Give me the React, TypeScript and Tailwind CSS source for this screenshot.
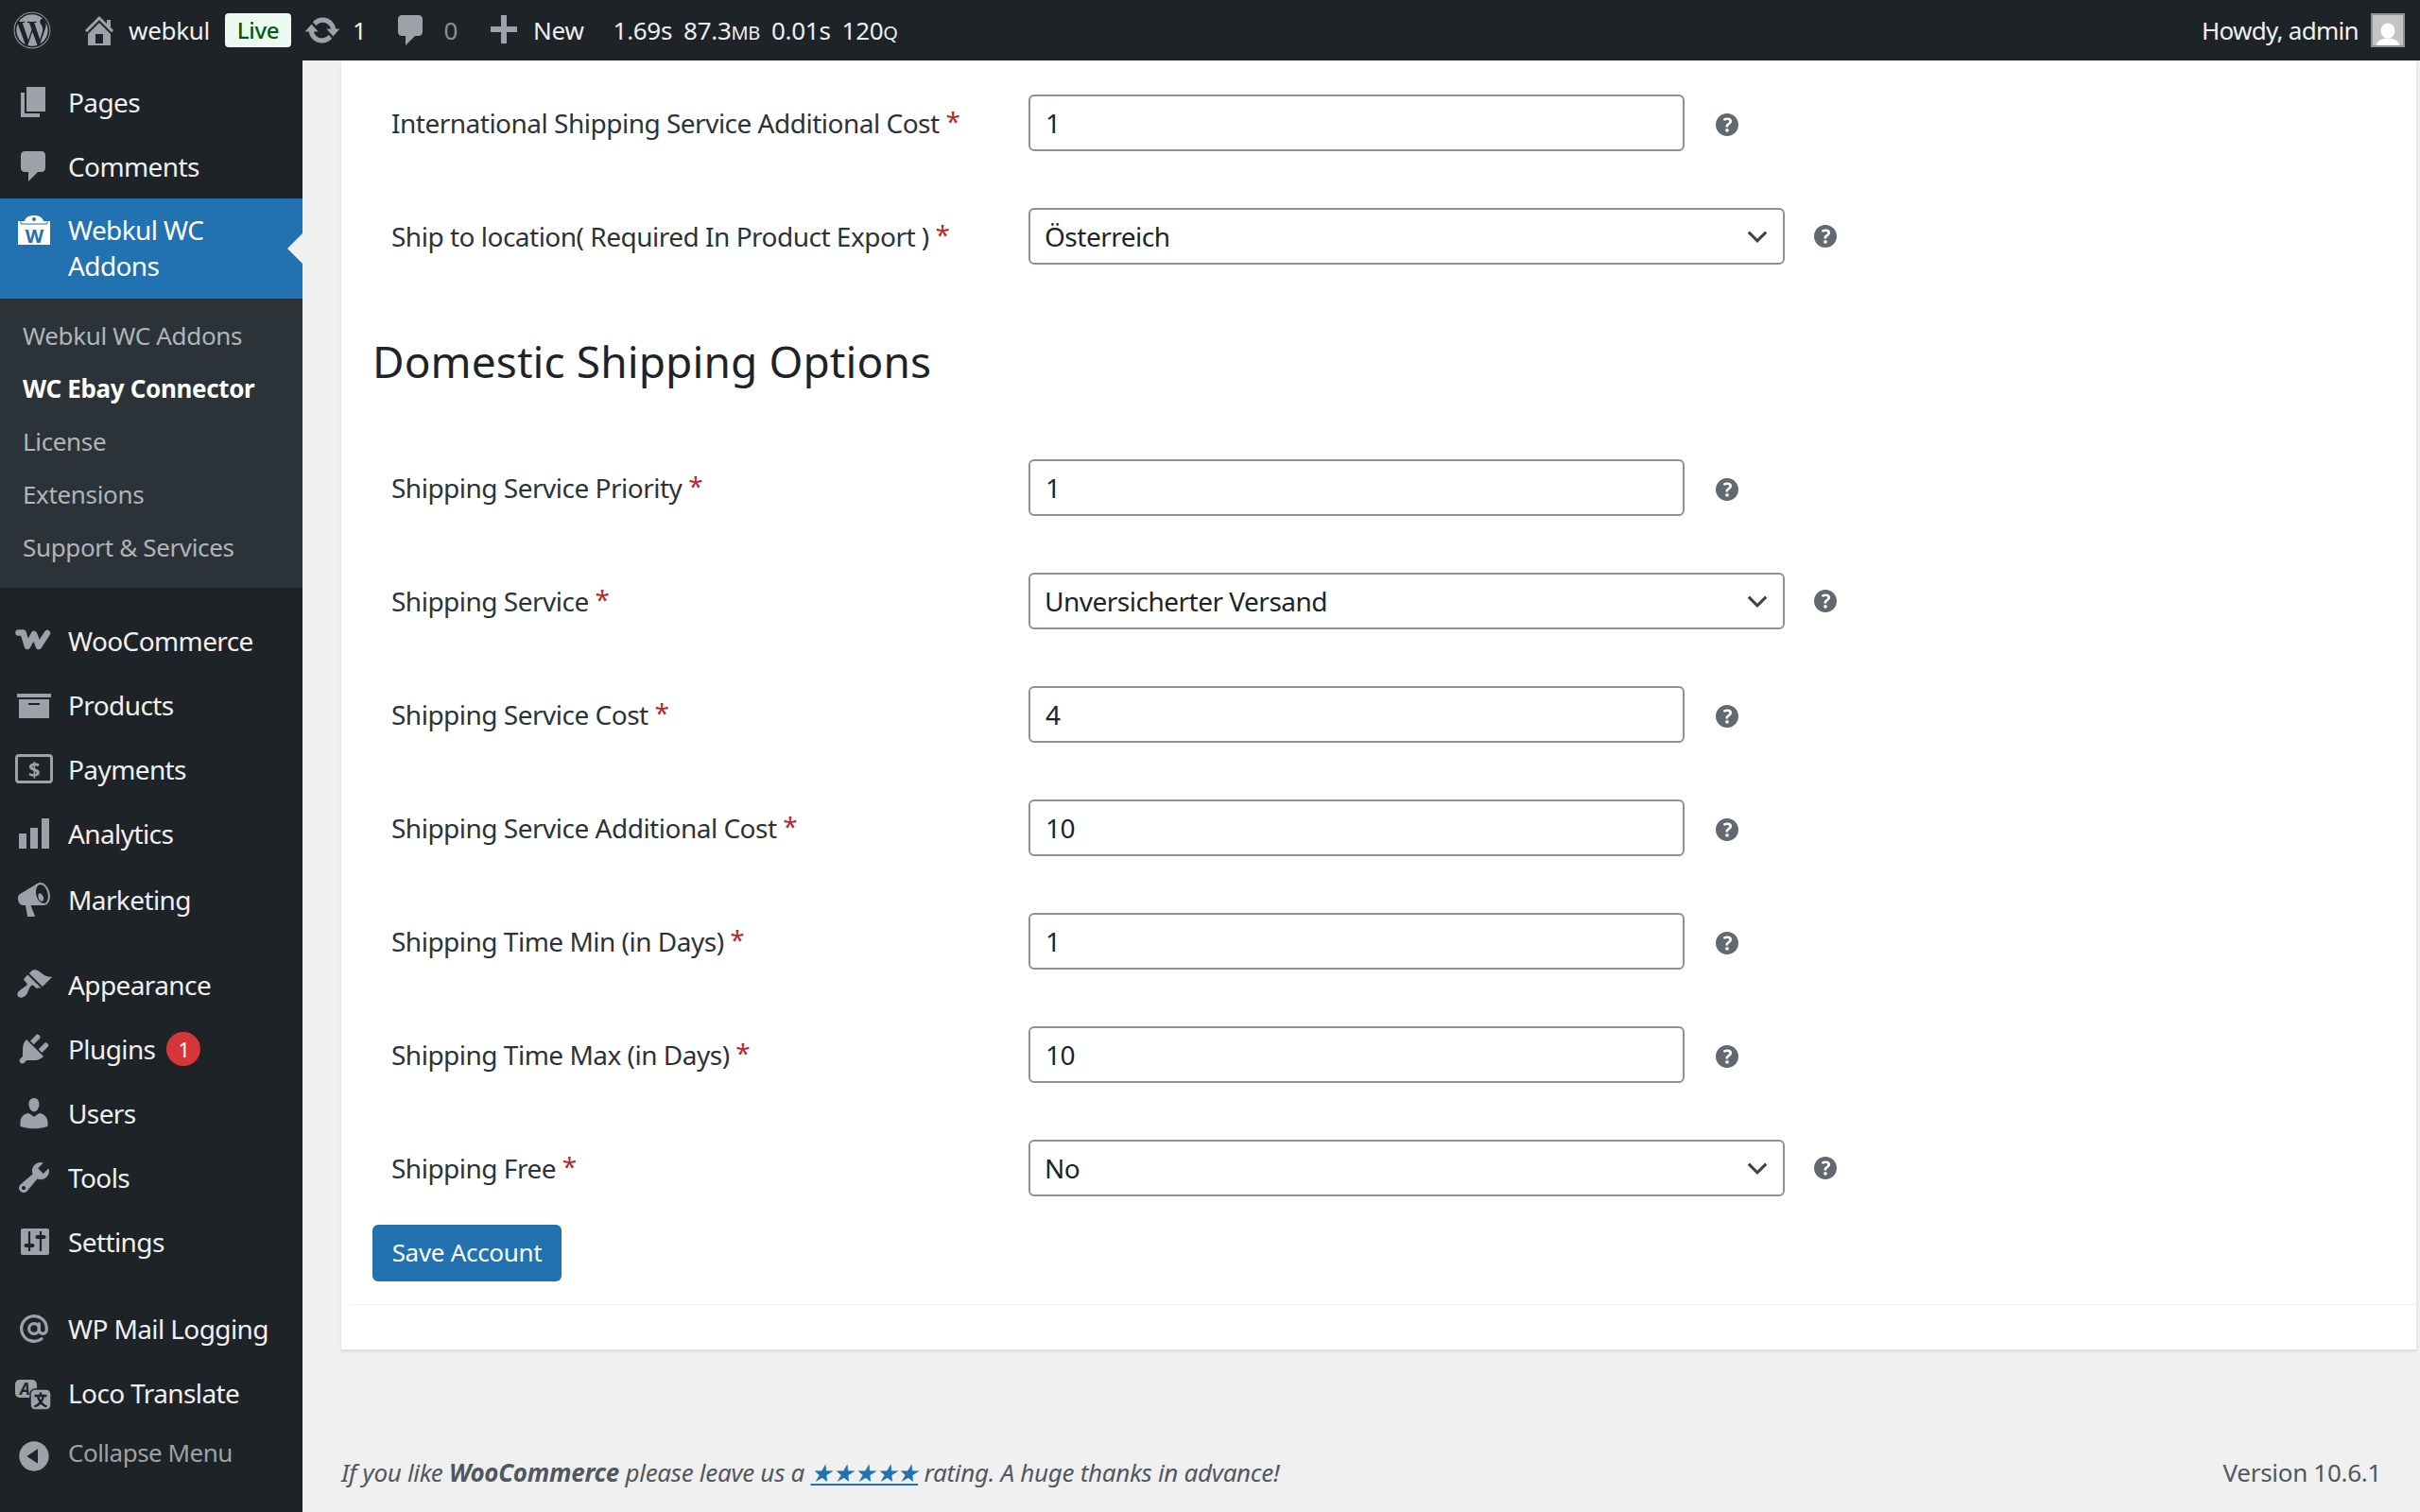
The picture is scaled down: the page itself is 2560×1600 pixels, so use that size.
import { ReactNode } from 'react'
import { AtSign } from 'lucide-react'
import { FaWordpress } from 'react-icons/fa'

const icons: Record<string, string> = {
  home: 'M16 8.5l1.53 1.53-1.06 1.06L10 4.62l-6.47 6.47-1.06-1.06L10 2.5l4 4v-2h2v4zm-6-2.46l6 5.99V18H4v-5.97zM12 17v-5H8v5h4z',
  update: 'M10.2 3.28c3.53 0 6.43 2.61 6.92 6h2.08l-3.5 4-3.5-4h2.32c-.45-1.97-2.21-3.45-4.32-3.45-1.45 0-2.73.71-3.54 1.78L4.95 5.66C6.23 4.2 8.11 3.28 10.2 3.28zm-.4 13.44c-3.52 0-6.43-2.61-6.92-6H.8l3.5-4c1.17 1.33 2.33 2.67 3.5 4H5.48c.45 1.97 2.21 3.45 4.32 3.45 1.45 0 2.73-.71 3.54-1.78l1.71 1.95c-1.28 1.46-3.15 2.38-5.25 2.38z',
  comment: 'M5 2h9c1.1 0 2 .9 2 2v7c0 1.1-.9 2-2 2h-2l-5 5v-5H5c-1.1 0-2-.9-2-2V4c0-1.1.9-2 2-2z',
  plus: 'M17 8v3h-5.5v6h-3v-6H3V8h5.5V2h3v6H17z',
  pages: 'M6 15V2h10v13H6zm-1 1h8v2H3V5h2v11z',
  products: 'M19 4v2H1V4h18zM2 7h16v10H2V7zm11 3V9H7v1h6z',
  analytics: 'M18 18V2h-4v16h4zm-6 0V7H8v11h4zm-6 0v-8H2v8h4z',
  marketing: 'M18.15 5.94c.46 1.62.38 3.22-.02 4.48-.42 1.28-1.26 2.18-2.3 2.48-.16.06-.26.06-.4.06-.06.02-.12.02-.18.02-.06.02-.14.02-.22.02h-6.8l2.22 5.5c.02.14-.06.26-.14.34-.08.1-.24.16-.34.16H6.95c-.1 0-.26-.06-.34-.16-.08-.08-.16-.2-.14-.34l-1-5.5H4.25l-.02-.02c-.5.06-1.08-.18-1.54-.62s-.88-1.08-1.06-1.88c-.24-.8-.2-1.56-.02-2.2.2-.62.58-1.08 1.06-1.3l.02-.02 9-5.4c.1-.06.18-.1.24-.16.06-.04.14-.08.24-.12.16-.08.28-.12.5-.18 1.04-.3 2.24.1 3.22.98s1.84 2.24 2.26 3.86zm-2.58 5.98h-.02c.4-.1.74-.34 1.04-.7.58-.7.86-1.76.86-3.04 0-.64-.1-1.3-.28-1.98-.34-1.36-1.02-2.5-1.78-3.24s-1.68-1.1-2.46-.88c-.82.22-1.4.96-1.7 2-.32 1.04-.34 2.4.02 3.76.38 1.36 1.04 2.48 1.8 3.22.78.74 1.62 1.1 2.52.86zm-2.98-5.2c.24-.1.46-.1.7-.02.76.24 1.44 1.04 1.7 2.06.06.24.1.46.1.68 0 .68-.28 1.2-.76 1.38-.06.02-.12.04-.18.04-.66.16-1.5-.64-1.8-1.78-.3-1.1-.1-2.12.24-2.36z',
  appearance: 'M14.48 11.06L7.41 3.99l1.5-1.5c.5-.56 2.3-.47 3.51.32 1.21.8 1.43 1.28 2.91 2.1 1.18.64 2.45 1.26 4.45.85zm-.71.71L6.7 4.7 4.93 6.47c-.39.39-.39 1.02 0 1.41l1.06 1.06c.39.39.39 1.03 0 1.42-.6.6-1.43 1.11-2.21 1.69-.35.26-.7.53-1.01.84C1.43 13.25.87 15.3 1.4 16s1.6 1.03 2.37.75c1.07-.4 2.02-1.08 2.59-2.15.33-.6.6-1.27.85-1.95.27-.74.59-1.44 1.22-2.06.39-.39 1.02-.39 1.41 0l1.06 1.06c.39.39 1.02.39 1.41 0z',
  plugins: 'M13.11 4.36L9.87 7.6 8 5.73l3.24-3.24c.35-.34 1.05-.2 1.56.32.52.51.66 1.21.31 1.55zm-8 1.77l.91-1.12 9.01 9.01-1.19.84c-.71.71-2.63 1.16-3.82 1.16H6.14L4.9 17.26c-.59.59-1.54.59-2.12 0-.59-.58-.59-1.53 0-2.12l1.24-1.24v-3.88c0-1.13.4-3.19 1.09-3.89zm7.26 3.97l3.24-3.24c.34-.35 1.04-.21 1.55.31.52.51.66 1.21.31 1.55l-3.24 3.25z',
  users: 'M10 9.25c-2.27 0-2.73-3.44-2.73-3.44C7 4.02 7.82 2 9.97 2c2.16 0 2.98 2.02 2.71 3.81 0 0-.41 3.44-2.68 3.44zm0 2.57L12.72 10c2.39 0 4.52 2.33 4.52 4.53v2.49s-3.65 1.13-7.24 1.13c-3.65 0-7.24-1.13-7.24-1.13v-2.49c0-2.25 1.94-4.48 4.47-4.48z',
  tools: 'M16.68 9.77c-1.34 1.34-3.3 1.67-4.95.99l-5.41 6.52c-.99.99-2.59.99-3.58 0s-.99-2.59 0-3.57l6.52-5.42c-.68-1.65-.35-3.61.99-4.95 1.28-1.28 3.12-1.62 4.72-1.06l-2.89 2.89 2.82 2.82 2.86-2.87c.53 1.58.18 3.39-1.08 4.65zM3.81 16.21c.4.39 1.04.39 1.43 0 .4-.4.4-1.04 0-1.43-.39-.4-1.03-.4-1.43 0-.39.39-.39 1.03 0 1.43z',
  collapse: 'M10 2.16c4.33 0 7.84 3.51 7.84 7.84s-3.51 7.84-7.84 7.84S2.16 14.33 2.16 10 5.71 2.16 10 2.16zm2 11.72V6.12L6.18 9.97z',
  help: 'M17 10c0-3.87-3.14-7-7-7-3.87 0-7 3.13-7 7s3.13 7 7 7c3.86 0 7-3.13 7-7zm-6.3 1.48H9.14v-.43c0-.38.08-.7.24-.98s.46-.57.88-.89c.41-.29.68-.53.81-.71.14-.18.2-.39.2-.62 0-.25-.09-.44-.28-.58-.19-.13-.45-.19-.79-.19-.58 0-1.25.19-2 .57l-.64-1.28c.87-.49 1.8-.74 2.77-.74.81 0 1.45.2 1.92.58.48.39.71.91.71 1.55 0 .43-.09.8-.29 1.11-.19.32-.57.67-1.11 1.06-.38.28-.61.49-.71.63-.1.15-.15.34-.15.57v.35zm-1.47 2.74c-.18-.18-.27-.43-.27-.76 0-.33.08-.59.26-.77s.43-.27.77-.27c.32 0 .57.09.75.27s.27.44.27.77c0 .32-.09.57-.27.75s-.43.28-.75.28c-.33 0-.58-.09-.76-.27z',
}

function Dash({ name, className = 'w-10 h-10 fill-[#9ca2a7]' }: { name: string; className?: string }) {
  return (
    <svg viewBox="0 0 20 20" className={className}>
      <path d={icons[name]} />
    </svg>
  )
}

function WooIcon() {
  return (
    <svg viewBox="0 0 40 40" className="w-10 h-10">
      <path
        d="M3.500 11.500h5L13 26l7-13 5 13 9-14"
        className="fill-none stroke-[#9ca2a7]"
        strokeWidth="6.500"
        strokeLinecap="round"
        strokeLinejoin="round"
      />
    </svg>
  )
}

function PaymentsIcon() {
  return (
    <svg viewBox="0 0 40 40" className="w-10 h-10">
      <rect x="1.500" y="5.500" width="37" height="28" rx="2.500" className="fill-none stroke-[#9ca2a7]" strokeWidth="3" />
      <text x="20" y="28" textAnchor="middle" className="fill-[#9ca2a7] font-bold text-[22px]">$</text>
    </svg>
  )
}

function SettingsIcon() {
  return (
    <svg viewBox="0 0 40 40" className="w-10 h-10">
      <rect x="6" y="6" width="30" height="28" rx="2" className="fill-[#9ca2a7]" />
      <path d="M15 9v21M27 9v21" className="stroke-[#1d2327]" strokeWidth="2.200" />
      <path d="M11.500 24h7M23.500 15h7" className="stroke-[#1d2327]" strokeWidth="4" strokeLinecap="round" />
    </svg>
  )
}

function LocoIcon() {
  return (
    <svg viewBox="0 0 40 40" className="w-10 h-10">
      <rect x="0" y="6" width="23" height="19" rx="5" className="fill-[#9ca2a7]" />
      <text x="10" y="22" textAnchor="middle" className="fill-[#1d2327] font-bold italic text-[17px]">A</text>
      <rect x="16" y="16" width="22" height="22" rx="5" className="fill-[#9ca2a7] stroke-[#1d2327]" strokeWidth="1.500" />
      <path d="M27 19.500v3.500M20.500 23h13M24 23c.8 5 4.500 9.500 9.500 11.500M30 23c-.8 5-4.500 9.500-9.500 11.500" className="fill-none stroke-[#1d2327]" strokeWidth="2.400" />
    </svg>
  )
}

function BagIcon() {
  return (
    <svg viewBox="0 0 40 40" className="w-10 h-10">
      <path d="M3 7h7c1-4 4.500-6 10-6s9 2 10 6h7v25H3z" className="fill-white" />
      <path d="M6 7.500v2.500h28V7.500" className="fill-none stroke-[#2271b1]" strokeWidth="1" />
      <circle cx="20" cy="5" r="2" className="fill-[#2271b1]" />
      <text x="20" y="29.500" textAnchor="middle" className="fill-[#2271b1] font-bold text-[20px]">W</text>
    </svg>
  )
}

function MenuItem({ icon, label, children }: { icon: ReactNode; label: string; children?: ReactNode }) {
  return (
    <div className="h-[68px] flex items-center pl-4 text-[#f0f0f1]">
      <span className="w-10 h-10 flex items-center justify-center shrink-0">{icon}</span>
      <span className="ml-4">{label}</span>
      {children}
    </div>
  )
}

function SubItem({ label, current }: { label: string; current?: boolean }) {
  return (
    <div className={current ? 'h-14 flex items-center pl-6 font-bold text-white' : 'h-14 flex items-center pl-6 text-[#b0b5b9]'}>
      {label}
    </div>
  )
}

function Sidebar() {
  return (
    <aside className="w-80 shrink-0 bg-[#1d2327] pt-[10px] text-[28px] tracking-[-0.6px] relative">
      <MenuItem icon={<Dash name="pages" />} label="Pages" />
      <MenuItem icon={<Dash name="comment" />} label="Comments" />
      <div className="h-[106px] bg-[#2271b1] flex items-start pl-4 pt-[14px] text-white relative">
        <span className="w-10 h-10 mt-[3px] shrink-0 flex items-center justify-center"><BagIcon /></span>
        <span className="ml-4 leading-[38px] w-[200px]">Webkul WC Addons</span>
        <span className="absolute right-0 top-[37px] border-y-[16px] border-r-[16px] border-y-transparent border-r-[#f0f0f1]" />
      </div>
      <div className="h-[306px] bg-[#2c3338] pt-[11px] text-[26px] tracking-[-0.35px]">
        <SubItem label="Webkul WC Addons" />
        <SubItem label="WC Ebay Connector" current />
        <SubItem label="License" />
        <SubItem label="Extensions" />
        <SubItem label="Support & Services" />
      </div>
      <div className="mt-[22px]">
        <MenuItem icon={<WooIcon />} label="WooCommerce" />
        <MenuItem icon={<Dash name="products" />} label="Products" />
        <MenuItem icon={<PaymentsIcon />} label="Payments" />
        <MenuItem icon={<Dash name="analytics" />} label="Analytics" />
      </div>
      <div className="mt-[2px]">
        <MenuItem icon={<Dash name="marketing" />} label="Marketing" />
      </div>
      <div className="mt-[22px]">
        <MenuItem icon={<Dash name="appearance" />} label="Appearance" />
        <MenuItem icon={<Dash name="plugins" />} label="Plugins">
          <span className="ml-3 w-9 h-9 rounded-full bg-[#d63638] text-white text-[22px] flex items-center justify-center">1</span>
        </MenuItem>
        <MenuItem icon={<Dash name="users" />} label="Users" />
        <MenuItem icon={<Dash name="tools" />} label="Tools" />
        <MenuItem icon={<SettingsIcon />} label="Settings" />
      </div>
      <div className="mt-6">
        <MenuItem icon={<AtSign className="w-8 h-8 text-[#9ca2a7]" strokeWidth={2.4} />} label="WP Mail Logging" />
        <MenuItem icon={<LocoIcon />} label="Loco Translate" />
      </div>
      <div className="flex items-center pl-4 h-[58px] text-[26px] tracking-[-0.5px] text-[#9ca2a7]">
        <span className="w-10 h-10 mt-2 shrink-0"><Dash name="collapse" /></span>
        <span className="ml-4">Collapse Menu</span>
      </div>
    </aside>
  )
}

function TopBar() {
  return (
    <header className="h-16 bg-[#1d2327] flex items-center text-[26px] tracking-[-0.3px] text-[#f0f0f1] whitespace-nowrap">
      <FaWordpress className="ml-[14px] w-10 h-10 text-[#9ca2a7]" />
      <Dash name="home" className="ml-[31px] w-10 h-10 fill-[#9ca2a7]" />
      <span className="ml-[11px]">webkul</span>
      <span className="ml-4 h-9 w-[70px] rounded bg-[#edfaef] text-[#005c12] text-[24px] font-medium flex items-center justify-center">Live</span>
      <Dash name="update" className="ml-[13px] w-10 h-10 fill-[#9ca2a7]" />
      <span className="ml-[12px]">1</span>
      <Dash name="comment" className="ml-[27px] w-10 h-10 fill-[#9ca2a7]" />
      <span className="ml-[15px] text-[#8c8f94]">0</span>
      <Dash name="plus" className="ml-[29px] w-10 h-10 fill-[#9ca2a7]" />
      <span className="ml-[11px]">New</span>
      <span className="ml-[31px]">1.69s</span>
      <span className="ml-[12px]">87.3<span className="text-[20px]">MB</span></span>
      <span className="ml-[12px]">0.01s</span>
      <span className="ml-[12px]">120<span className="text-[20px]">Q</span></span>
      <span className="ml-auto tracking-[-0.7px]">Howdy, admin</span>
      <span className="ml-[13px] mr-4 w-9 h-9 border-2 border-[#8f9194] bg-[#c4c4c4] flex items-end justify-center overflow-hidden">
        <svg viewBox="2 2 32 32" className="w-8 h-8 fill-white shrink-0">
          <ellipse cx="18" cy="18.500" rx="7.500" ry="8" />
          <path d="M6 34c0-5 6-7.500 12-7.500s12 2.500 12 7.500z" />
        </svg>
      </span>
    </header>
  )
}

function Help({ select }: { select?: boolean }) {
  return (
    <svg viewBox="3 3 14 14" className={select ? 'ml-[31px] w-6 h-6 fill-[#646970]' : 'ml-[33px] mt-[3px] w-6 h-6 fill-[#646970]'}>
      <path d={icons.help} />
    </svg>
  )
}

function Row({ label, value, select }: { label: string; value: string; select?: boolean }) {
  return (
    <div className="h-[60px] flex items-center">
      <label className="w-[694px] shrink-0 pl-5 text-[#2c3338]">
        {label} <span className="text-[#b32d2e] relative -top-0.5">*</span>
      </label>
      {select ? (
        <div className="relative w-[800px]">
          <select
            defaultValue={value}
            className="w-full h-[60px] appearance-none bg-white border-2 border-[#8c8f94] rounded-md pl-[15px] text-[28px] text-[#1d2327]"
          >
            <option>{value}</option>
          </select>
          <svg viewBox="0 0 20 12" className="absolute right-[18px] top-[24px] w-[22px] h-[13px] fill-none stroke-[#3c434a] pointer-events-none" strokeWidth="2.800">
            <path d="M1.500 1.500L10 10l8.500-8.500" />
          </svg>
        </div>
      ) : (
        <input
          readOnly
          value={value}
          className="w-[694px] h-[60px] bg-white border-2 border-[#8c8f94] rounded-md pl-4 text-[28px] text-[#1d2327]"
        />
      )}
      <Help select={select} />
    </div>
  )
}

export default function App() {
  return (
    <div className="min-h-screen bg-[#f0f0f1] font-['Noto_Sans',sans-serif]">
      <TopBar />
      <div className="flex min-h-[1536px]">
        <Sidebar />
        <main className="flex-1 min-w-0 flex flex-col">
          <div className="ml-[41px] mr-1 h-[1364px] bg-white shadow-[0_2px_3px_rgba(0,0,0,0.1)] pt-9 text-[28px] tracking-[-0.5px]">
            <div className="pl-[33px] flex flex-col gap-[60px]">
              <Row label="International Shipping Service Additional Cost" value="1" />
              <Row label="Ship to location( Required In Product Export )" value="Österreich" select />
            </div>
            <h2 className="pl-[33px] h-[206px] pb-[2px] flex items-center text-[46px] tracking-[0.1px] leading-none font-normal text-[#1d2327]">
              Domestic Shipping Options
            </h2>
            <div className="pl-[33px] flex flex-col gap-[60px]">
              <Row label="Shipping Service Priority" value="1" />
              <Row label="Shipping Service" value="Unversicherter Versand" select />
              <Row label="Shipping Service Cost" value="4" />
              <Row label="Shipping Service Additional Cost" value="10" />
              <Row label="Shipping Time Min (in Days)" value="1" />
              <Row label="Shipping Time Max (in Days)" value="10" />
              <Row label="Shipping Free" value="No" select />
            </div>
            <button className="ml-[33px] mt-[30px] w-[200px] h-[60px] pb-[2px] rounded-md bg-[#2271b1] text-white text-[26px] tracking-[-0.3px]">
              Save Account
            </button>
            <div className="ml-[9px] mt-6 h-px bg-[#f0f0f1]" />
          </div>
          <footer className="ml-[41px] mr-[41px] mt-[111px] flex justify-between text-[26px] tracking-[-0.3px] text-[#50575e]">
            <p className="italic">
              If you like <strong className="font-bold">WooCommerce</strong> please leave us a{' '}
              <a className="text-[#2271b1] underline">★★★★★</a> rating. A huge thanks in advance!
            </p>
            <span>Version 10.6.1</span>
          </footer>
        </main>
      </div>
    </div>
  )
}
